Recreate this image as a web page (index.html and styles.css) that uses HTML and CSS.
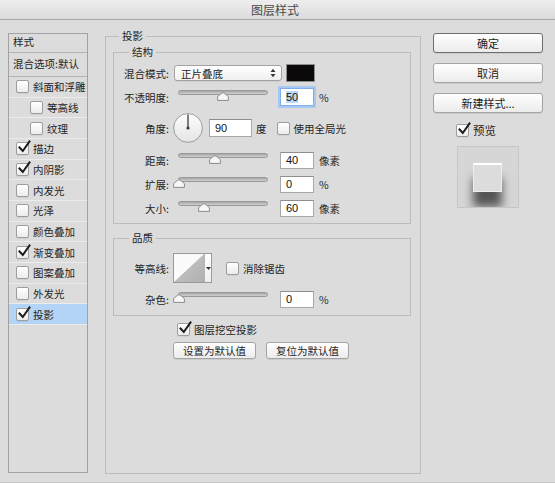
FILE: index.html
```html
<!DOCTYPE html>
<html>
<head>
<meta charset="utf-8">
<title>图层样式</title>
<link rel="stylesheet" href="styles.css">
</head>
<body>
<div class="window">
  <div class="titlebar">图层样式</div>
  <div class="main">
    <div class="sidebar">
      <div class="side-head">样式</div>
      <div class="side-blend">混合选项:默认</div>
      <div class="side-item"><span class="cb"></span><span>斜面和浮雕</span></div>
      <div class="side-item sub"><span class="cb"></span><span>等高线</span></div>
      <div class="side-item sub"><span class="cb"></span><span>纹理</span></div>
      <div class="side-item"><span class="cb"><svg class="tick" viewBox="0 0 14 14" width="14" height="14"><path d="M2.5 7.5 L5.8 11 L12.5 1.5" /></svg></span><span>描边</span></div>
      <div class="side-item"><span class="cb"><svg class="tick" viewBox="0 0 14 14" width="14" height="14"><path d="M2.5 7.5 L5.8 11 L12.5 1.5" /></svg></span><span>内阴影</span></div>
      <div class="side-item"><span class="cb"></span><span>内发光</span></div>
      <div class="side-item"><span class="cb"></span><span>光泽</span></div>
      <div class="side-item"><span class="cb"></span><span>颜色叠加</span></div>
      <div class="side-item"><span class="cb"><svg class="tick" viewBox="0 0 14 14" width="14" height="14"><path d="M2.5 7.5 L5.8 11 L12.5 1.5" /></svg></span><span>渐变叠加</span></div>
      <div class="side-item"><span class="cb"></span><span>图案叠加</span></div>
      <div class="side-item"><span class="cb"></span><span>外发光</span></div>
      <div class="side-item sel"><span class="cb"><svg class="tick" viewBox="0 0 14 14" width="14" height="14"><path d="M2.5 7.5 L5.8 11 L12.5 1.5" /></svg></span><span>投影</span></div>
    </div>

    <div class="group outer">
      <div class="legend legend-outer">投影</div>

      <div class="group inner">
        <div class="legend legend-inner">结构</div>

        <div class="row r-blend">
          <span class="lbl">混合模式:</span>
          <div class="select">
            <span>正片叠底</span>
            <svg class="updown" viewBox="0 0 6 10" width="6" height="10"><path d="M0.5 4 L3 0.8 L5.5 4 Z M0.5 6 L3 9.2 L5.5 6 Z"/></svg>
          </div>
          <span class="swatch"></span>
        </div>

        <div class="row r-std">
          <span class="lbl">不透明度:</span>
          <div class="slider">
            <div class="track"></div>
            <svg class="thumb" style="left:43px" viewBox="0 0 12 9" width="12" height="9"><path d="M6 0.6 Q7 0.6 11.4 4.6 L11.4 8.4 L0.6 8.4 L0.6 4.6 Q5 0.6 6 0.6 Z"/></svg>
          </div>
          <div class="input focus"><span class="selected">50</span></div>
          <span class="unit">%</span>
        </div>

        <div class="row r-angle">
          <span class="lbl">角度:</span>
          <svg class="dial" viewBox="0 0 30 30" width="30" height="30">
            <defs><linearGradient id="dg" x1="0" y1="0" x2="0" y2="1"><stop offset="0" stop-color="#fdfdfd"/><stop offset="1" stop-color="#e4e4e4"/></linearGradient></defs>
            <circle cx="15" cy="15" r="14.4" fill="url(#dg)" stroke="#9b9b9b" stroke-width="1"/>
            <line x1="15" y1="15" x2="15" y2="1.4" stroke="#3c3c3c" stroke-width="1.3"/>
            <circle cx="15" cy="15" r="1.6" fill="#3c3c3c"/>
          </svg>
          <div class="input wide">90</div>
          <span class="unit deg">度</span>
          <span class="cb global"></span>
          <span class="cb-text">使用全局光</span>
        </div>

        <div class="row r-std r-dist">
          <span class="lbl">距离:</span>
          <div class="slider">
            <div class="track"></div>
            <svg class="thumb" style="left:35px" viewBox="0 0 12 9" width="12" height="9"><path d="M6 0.6 Q7 0.6 11.4 4.6 L11.4 8.4 L0.6 8.4 L0.6 4.6 Q5 0.6 6 0.6 Z"/></svg>
          </div>
          <div class="input">40</div>
          <span class="unit">像素</span>
        </div>

        <div class="row r-std">
          <span class="lbl">扩展:</span>
          <div class="slider">
            <div class="track"></div>
            <svg class="thumb" style="left:-1px" viewBox="0 0 12 9" width="12" height="9"><path d="M6 0.6 Q7 0.6 11.4 4.6 L11.4 8.4 L0.6 8.4 L0.6 4.6 Q5 0.6 6 0.6 Z"/></svg>
          </div>
          <div class="input">0</div>
          <span class="unit">%</span>
        </div>

        <div class="row r-std">
          <span class="lbl">大小:</span>
          <div class="slider">
            <div class="track"></div>
            <svg class="thumb" style="left:24px" viewBox="0 0 12 9" width="12" height="9"><path d="M6 0.6 Q7 0.6 11.4 4.6 L11.4 8.4 L0.6 8.4 L0.6 4.6 Q5 0.6 6 0.6 Z"/></svg>
          </div>
          <div class="input">60</div>
          <span class="unit">像素</span>
        </div>
      </div>

      <div class="group inner quality">
        <div class="legend legend-inner">品质</div>

        <div class="row r-contour">
          <span class="lbl">等高线:</span>
          <div class="contour">
            <svg class="curve" viewBox="0 0 30 28" width="30" height="28" preserveAspectRatio="none">
              <defs><linearGradient id="cg" x1="0" y1="0" x2="1" y2="1"><stop offset="0" stop-color="#c9c9c9"/><stop offset="1" stop-color="#b0b0b0"/></linearGradient></defs>
              <rect x="0" y="0" width="30" height="28" fill="#fbfbfb"/>
              <path d="M30 0 L30 28 L0 28 Z" fill="url(#cg)"/>
            </svg>
            <div class="contour-drop"><svg viewBox="0 0 5 3" width="5" height="3"><path d="M0 0 L5 0 L2.5 3 Z"/></svg></div>
          </div>
          <span class="cb anti"></span>
          <span class="cb-text">消除锯齿</span>
        </div>

        <div class="row r-std r-noise">
          <span class="lbl">杂色:</span>
          <div class="slider">
            <div class="track"></div>
            <svg class="thumb" style="left:-1px" viewBox="0 0 12 9" width="12" height="9"><path d="M6 0.6 Q7 0.6 11.4 4.6 L11.4 8.4 L0.6 8.4 L0.6 4.6 Q5 0.6 6 0.6 Z"/></svg>
          </div>
          <div class="input">0</div>
          <span class="unit">%</span>
        </div>
      </div>

      <div class="row r-knock">
        <span class="cb"><svg class="tick" viewBox="0 0 14 14" width="14" height="14"><path d="M2.5 7.5 L5.8 11 L12.5 1.5" /></svg></span>
        <span class="cb-text">图层挖空投影</span>
      </div>

      <div class="row r-defaults">
        <div class="btn small">设置为默认值</div>
        <div class="btn small">复位为默认值</div>
      </div>
    </div>

    <div class="actions">
      <div class="btn big default">确定</div>
      <div class="btn big">取消</div>
      <div class="btn big">新建样式...</div>
      <div class="preview-check">
        <span class="cb"><svg class="tick" viewBox="0 0 14 14" width="14" height="14"><path d="M2.5 7.5 L5.8 11 L12.5 1.5" /></svg></span>
        <span class="cb-text">预览</span>
      </div>
      <div class="preview">
        <div class="preview-square"></div>
      </div>
    </div>
  </div>
</div>
</body>
</html>
```

FILE: styles.css
```css
* {
  box-sizing: border-box;
}

html,
body {
  margin: 0;
  padding: 0;
}

body {
  width: 555px;
  height: 483px;
  overflow: hidden;
  background: #dcdcdc;
  font-family: "Noto Sans CJK SC", "Noto Sans", sans-serif;
  font-size: 10.5px;
  color: #242424;
}

.window {
  width: 555px;
  height: 483px;
  display: flex;
  flex-direction: column;
  background: #dcdcdc;
  border-bottom: 1px solid #c4c4c4;
}

.titlebar {
  flex: none;
  height: 20px;
  background: linear-gradient(#eeeeee, #dbdbdb);
  border-bottom: 1px solid #a9a9a9;
  text-align: center;
  line-height: 19px;
  font-size: 12px;
  color: #4a4a4a;
  padding-right: 5px;
}

.main {
  display: flex;
  align-items: flex-start;
  padding: 13px 0 0 8px;
}

/* ---------- sidebar ---------- */
.sidebar {
  flex: none;
  width: 80px;
  height: 440px;
  border: 1px solid #a2a2a2;
  display: flex;
  flex-direction: column;
}

.side-head {
  height: 19px;
  border-bottom: 1px solid #b3b3b3;
  padding-left: 4px;
  line-height: 16px;
}

.side-blend {
  height: 24px;
  border-bottom: 1px solid #b3b3b3;
  padding-left: 4px;
  line-height: 22px;
  white-space: nowrap;
}

.side-item {
  height: 20.67px;
  flex: none;
  border-bottom: 1px solid #ececec;
  display: flex;
  align-items: center;
  gap: 4px;
  padding-left: 7px;
  white-space: nowrap;
}

.side-item.sub {
  padding-left: 21px;
}

.side-item.sel {
  background: #b4d4f7;
}

/* ---------- checkbox ---------- */
.cb {
  flex: none;
  width: 13px;
  height: 13px;
  border: 1px solid #9d9d9d;
  border-radius: 2px;
  background: linear-gradient(#ffffff, #ececec);
  display: flex;
  align-items: center;
  justify-content: center;
  box-shadow: 0 1px 0 rgba(0, 0, 0, 0.05);
}

.tick {
  flex: none;
  overflow: visible;
  margin: -3px -3px 0 0;
}

.tick path {
  fill: none;
  stroke: #1c1c1c;
  stroke-width: 2;
  stroke-linecap: square;
}

.cb-text {
  margin-left: 4px;
  white-space: nowrap;
}

/* ---------- groups ---------- */
.group {
  border: 1px solid #bcbcbc;
  display: flex;
  flex-direction: column;
}

.outer {
  flex: none;
  width: 316px;
  height: 438px;
  margin: 3px 0 0 17px;
}

.inner {
  margin: 9px 9px 0 7px;
  padding-bottom: 5px;
}

.quality {
  margin-top: 14px;
  padding-bottom: 6px;
}

.legend {
  width: fit-content;
  height: 14px;
  line-height: 14px;
  margin-top: -8px;
  padding: 0 3px;
  background: #dcdcdc;
}

.legend-outer {
  margin-left: 13px;
}

.legend-inner {
  margin-left: 15px;
}

/* ---------- rows ---------- */
.row {
  display: flex;
  align-items: center;
  flex: none;
}

.lbl {
  flex: none;
  width: 55px;
  text-align: right;
  white-space: nowrap;
}

.r-blend {
  height: 20px;
  margin-top: 4px;
}

.r-std {
  height: 20px;
  margin-top: 4px;
}

.r-angle {
  height: 32px;
  margin-top: 5px;
}

.r-dist {
  margin-top: 6px;
}

.r-contour {
  height: 30px;
  margin-top: 8px;
}

.r-noise {
  margin-top: 6px;
}

.r-knock {
  height: 14px;
  margin: 6px 0 0 71px;
}

.r-defaults {
  height: 17px;
  margin: 6px 0 0 67px;
  gap: 10px;
}

/* ---------- select ---------- */
.select {
  flex: none;
  width: 108px;
  height: 16px;
  margin-left: 5px;
  border: 1px solid #a3a3a3;
  border-radius: 3px;
  background: linear-gradient(#ffffff, #f0f0f0);
  display: flex;
  align-items: center;
  justify-content: space-between;
  padding: 0 5px 0 6px;
  box-shadow: 0 1px 0 rgba(0, 0, 0, 0.06);
}

.updown path {
  fill: #3a3a3a;
}

.swatch {
  flex: none;
  width: 29px;
  height: 18px;
  margin-left: 4px;
  background: #0b0909;
  border: 1px solid #8d8d8d;
}

/* ---------- slider ---------- */
.slider {
  flex: none;
  width: 100px;
  height: 20px;
  margin-left: 5px;
  position: relative;
}

.track {
  height: 5px;
  margin: 3px 6px 0 4px;
  border: 1px solid #999;
  border-radius: 3px;
  background: linear-gradient(#a6a6a6, #d0d0d0);
}

.thumb {
  position: absolute;
  top: 5px;
}

.thumb path {
  fill: #f7f7f7;
  stroke: #8a8a8a;
  stroke-width: 1;
}

/* ---------- inputs ---------- */
.input {
  flex: none;
  width: 34px;
  height: 17px;
  margin-left: 6px;
  background: #fff;
  border: 1px solid #a8a8a8;
  border-top-color: #8e8e8e;
  padding-left: 5px;
  line-height: 15px;
  font-family: "Liberation Sans", "Noto Sans", sans-serif;
  font-size: 11px;
  color: #111;
}

.input.focus {
  height: 18px;
  border-color: #7faee8;
  box-shadow: 0 0 0 2px #a6c8f1;
  line-height: 16px;
}

.selected {
  background: #bcd8f8;
}

.input.wide {
  width: 43px;
  height: 18px;
  line-height: 16px;
}

.unit {
  flex: none;
  margin-left: 5px;
  white-space: nowrap;
}

.deg {
  margin-left: 4px;
}

.dial {
  flex: none;
  margin-left: 4px;
}

.global {
  margin-left: 10px;
}

/* ---------- contour ---------- */
.contour {
  flex: none;
  width: 39px;
  height: 30px;
  margin-left: 4px;
  border: 1px solid #9a9a9a;
  display: flex;
  background: #fff;
}

.curve {
  display: block;
  flex: none;
}

.contour-drop {
  flex: 1;
  border-left: 1px solid #b5b5b5;
  background: linear-gradient(#ffffff, #eeeeee);
  display: flex;
  align-items: center;
  justify-content: center;
}

.contour-drop path {
  fill: #333;
}

.anti {
  margin-left: 14px;
}

/* ---------- buttons ---------- */
.btn {
  flex: none;
  border: 1px solid #a4a4a4;
  border-radius: 3px;
  background: linear-gradient(#fefefe, #ececec);
  box-shadow: 0 1px 0 rgba(0, 0, 0, 0.07);
  text-align: center;
  white-space: nowrap;
  color: #1e1e1e;
}

.btn.small {
  width: 83px;
  height: 17px;
  line-height: 15px;
}

.btn.big {
  width: 110px;
  height: 20px;
  line-height: 18px;
  font-size: 11px;
  margin-bottom: 10px;
}

.btn.default {
  border-color: #6e6e6e;
}

/* ---------- actions ---------- */
.actions {
  flex: none;
  width: 110px;
  margin-left: 12px;
  display: flex;
  flex-direction: column;
}

.preview-check {
  display: flex;
  align-items: center;
  height: 14px;
  padding-left: 23px;
  font-size: 11.5px;
}

.preview {
  width: 62px;
  height: 62px;
  margin: 9px 0 0 24px;
  border: 1px solid #c6c6c6;
  background: #d6d6d6;
  overflow: hidden;
  padding: 16px 0 0 15px;
}

.preview-square {
  width: 29px;
  height: 29px;
  background: #dcdcdc;
  border: 1px solid #efefef;
  border-top: 2px solid #ffffff;
  box-shadow: 0 15px 9px rgba(0, 0, 0, 0.6);
}
```
